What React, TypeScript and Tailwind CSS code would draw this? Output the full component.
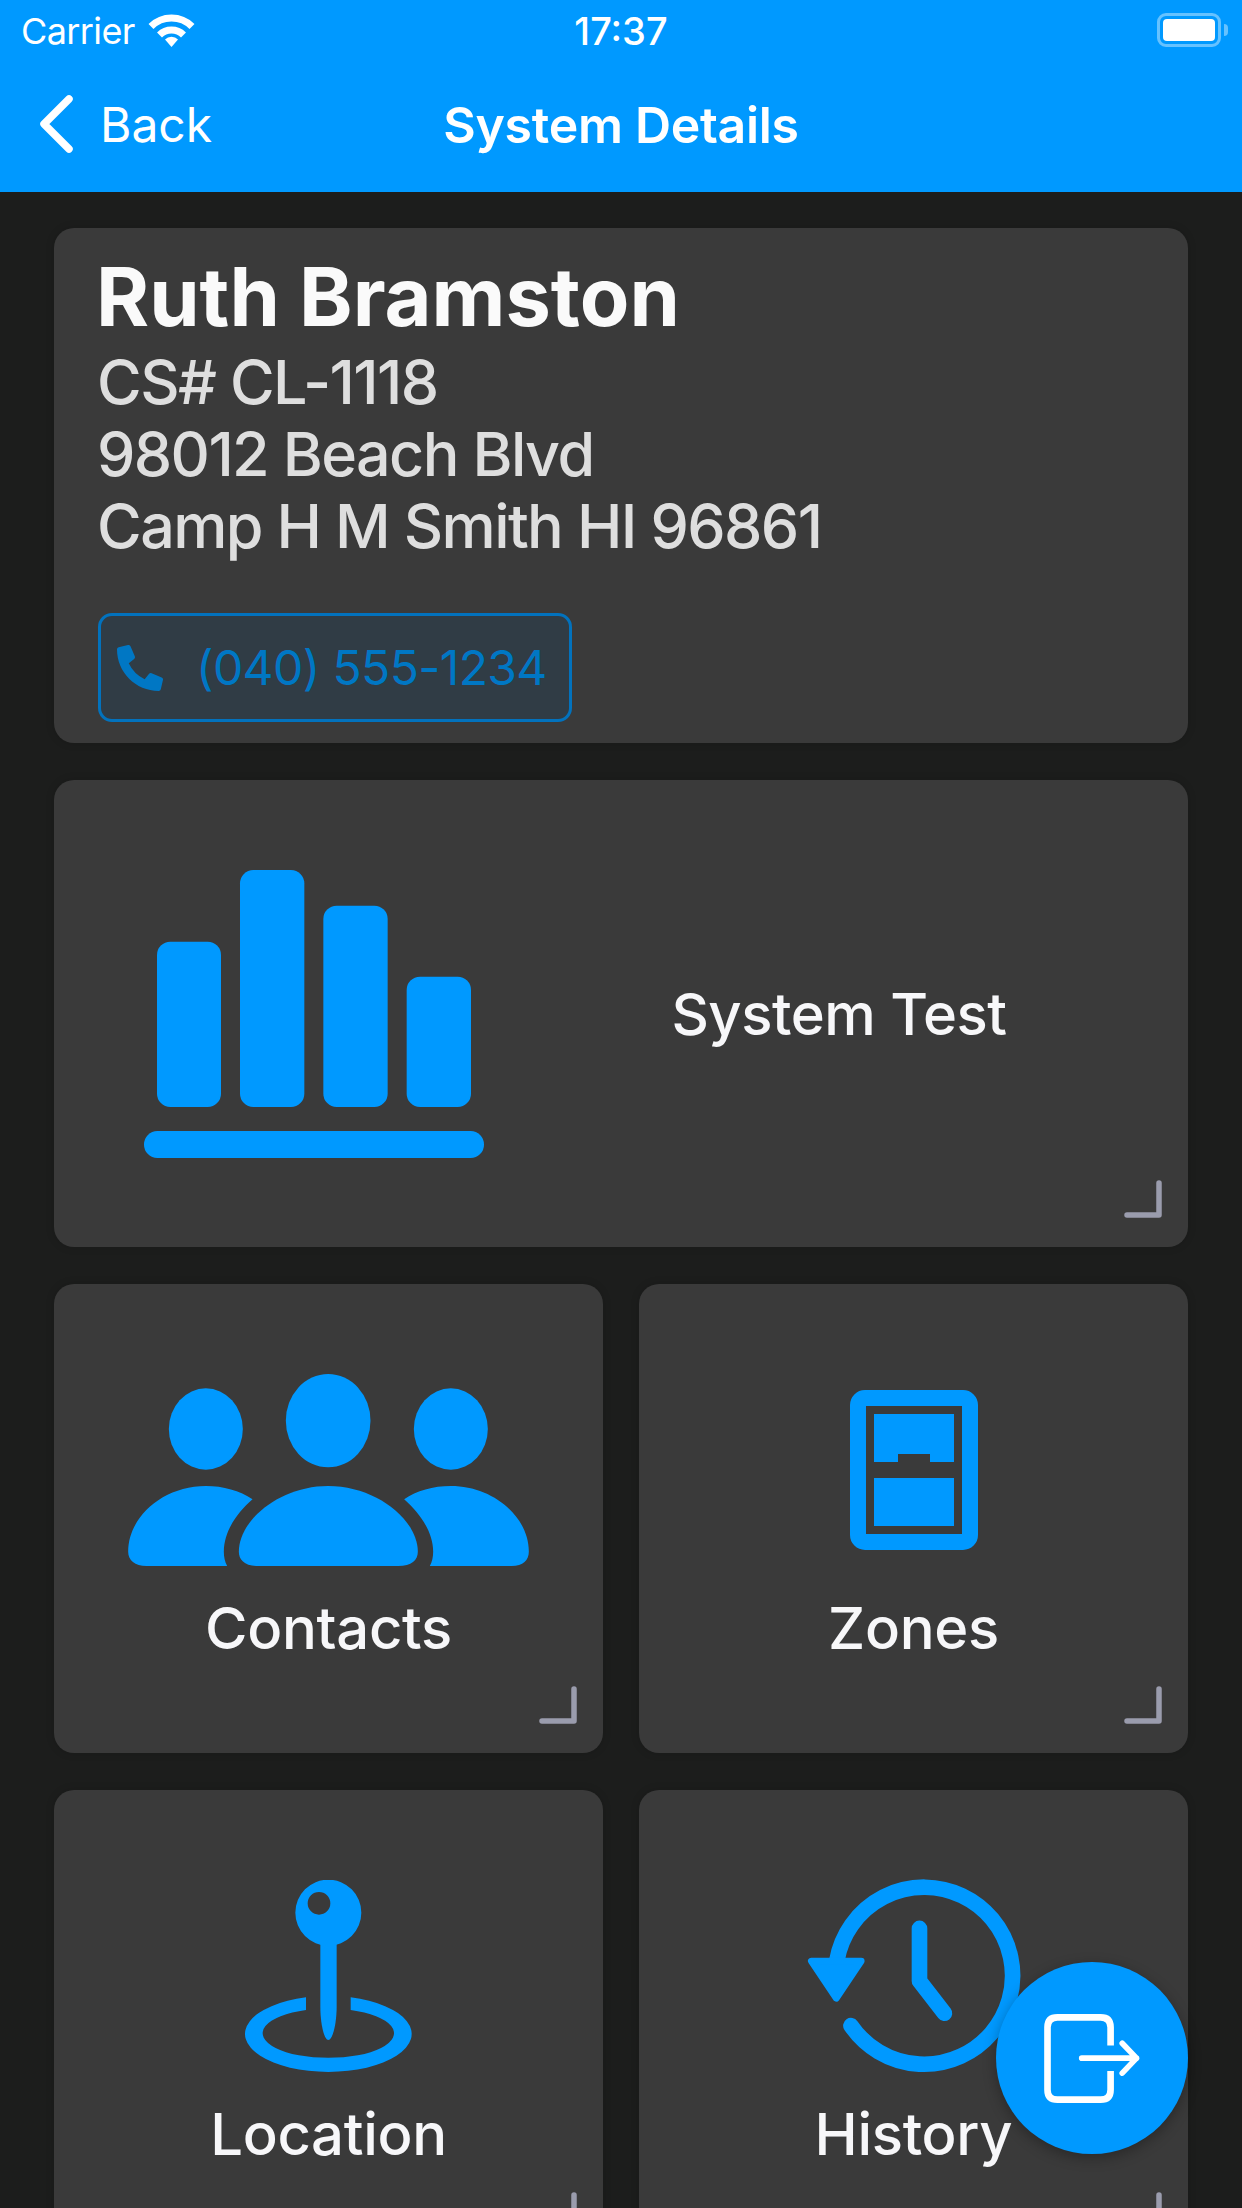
import { ReactNode } from 'react'
import { FaPhoneAlt } from 'react-icons/fa'

const sans = 'font-[Inter,"Noto_Sans",sans-serif]'

function CornerMark() {
  return (
    <svg className="absolute right-[26px] bottom-[29px]" width="38" height="38" viewBox="0 0 38 38" fill="none">
      <path d="M3 35H35V3" stroke="#9a9cad" strokeWidth="5.5" strokeLinecap="round" strokeLinejoin="round" />
    </svg>
  )
}

function StatusBar() {
  return (
    <div className="relative flex h-[60px] items-center pt-[2px] text-[36px] text-white">
      <span className="ml-[21px] leading-none tracking-[-0.6px]">Carrier</span>
      <svg className="ml-[13px] -mt-[2px]" width="47" height="33" viewBox="0 0 47 33" fill="none" stroke="#fff">
        <path d="M3 12.5A29 29 0 0 1 44 12.5" strokeWidth="7" />
        <path d="M11.5 21A17 17 0 0 1 35.5 21" strokeWidth="7" />
        <path d="M23.5 33L17 25.5A9 9 0 0 1 30 25.5Z" fill="#fff" stroke="none" />
      </svg>
      <span className="absolute left-0 right-0 text-center text-[38px] font-medium leading-none">17:37</span>
      <div className="absolute right-[14px] top-[13px] flex items-center">
        <div className="h-[34px] w-[64px] rounded-[9px] border-[3px] border-white/40 p-[3px]">
          <div className="h-full w-full rounded-[4px] bg-white" />
        </div>
        <div className="ml-[3px] h-[12px] w-[4px] rounded-r-full bg-white/40" />
      </div>
    </div>
  )
}

function NavBar() {
  return (
    <div className="relative flex h-[132px] items-center text-[48px] text-white">
      <svg className="ml-[39px] mb-[4px]" width="34" height="58" viewBox="0 0 34 58" fill="none">
        <path d="M30 4L5 29L30 54" stroke="#fff" strokeWidth="7.5" strokeLinecap="round" strokeLinejoin="round" />
      </svg>
      <span className="ml-[27px] mb-[2px] leading-none">Back</span>
      <span className="absolute left-0 right-0 mb-[2px] text-center text-[50px] font-semibold leading-none tracking-[-0.3px]">System Details</span>
    </div>
  )
}

function InfoCard() {
  return (
    <div className="h-[515px] rounded-[20px] bg-[#3a3a3a] pl-[44px] pt-[20px] shadow-[0_0_8px_rgba(0,0,0,0.15)]">
      <div className="-ml-[2px] text-[81px] font-bold leading-[98px] text-[#fafafa]">Ruth Bramston</div>
      <div className="-ml-[1px] text-[61px] font-[520] leading-[72px] tracking-[-1.6px] text-[#dedede]">
        <div>CS# CL-1118</div>
        <div>98012 Beach Blvd</div>
        <div>Camp H M Smith HI 96861</div>
      </div>
      <div className="mt-[51px] flex h-[109px] w-[474px] items-center rounded-[14px] border-[3px] border-[#0272bd] bg-[#303c45] pl-[15px]">
        <FaPhoneAlt className="h-[46px] w-[48px] text-[#0077c4]" />
        <span className="ml-[32px] text-[48px] leading-none tracking-[-0.6px] text-[#0077c4]">(040) 555-1234</span>
      </div>
    </div>
  )
}

function SystemTestCard() {
  return (
    <div className="relative flex h-[467px] items-center rounded-[20px] bg-[#3a3a3a] pl-[90px] shadow-[0_0_8px_rgba(0,0,0,0.15)]">
      <svg width="340" height="288" viewBox="72 90 1020 864" fill="#0099ff">
        <rect x="111" y="305" width="192" height="496" rx="40" />
        <rect x="360" y="90" width="193" height="711" rx="40" />
        <rect x="610" y="197" width="193" height="604" rx="40" />
        <rect x="860" y="410" width="193" height="391" rx="40" />
        <rect x="72" y="873" width="1020" height="81" rx="40" />
      </svg>
      <div className="flex-1 pl-[6px] text-center text-[58px] font-[530] leading-none tracking-[-0.5px] text-[#f7f7f9]">System Test</div>
      <CornerMark />
    </div>
  )
}

function ActionCard({ label, icon }: { label: string; icon: ReactNode }) {
  return (
    <div className="relative flex h-[469px] flex-col items-center rounded-[20px] bg-[#3a3a3a] pt-[90px] shadow-[0_0_8px_rgba(0,0,0,0.15)]">
      <div className="flex h-[192px] items-center justify-center">{icon}</div>
      <div className="mt-[30px] text-[58px] font-[530] leading-[64px] tracking-[-0.3px] text-[#f7f7f9]">{label}</div>
      <CornerMark />
    </div>
  )
}

const contactsIcon = (
  <svg width="401" height="192" viewBox="55 72 1202 576" fill="#0099ff">
    <ellipse cx="655" cy="212" rx="127" ry="140" />
    <ellipse cx="288" cy="237" rx="111" ry="122" />
    <ellipse cx="1023" cy="237" rx="111" ry="122" />
    <path d="M445 648C405 648 387 630 387 605C387 510 510 408 655 408C800 408 924 510 924 605C924 630 905 648 865 648Z" />
    <path d="M110 648C75 648 55 630 55 605C55 500 160 408 288 408C340 408 390 422 428 448C380 490 342 545 342 605C342 620 345 635 352 648Z" />
    <path d="M1205 648C1240 648 1257 630 1257 605C1257 500 1150 408 1023 408C970 408 920 422 883 448C930 490 970 545 970 605C970 620 967 635 960 648Z" />
  </svg>
)

const zonesIcon = (
  <svg width="128" height="160" viewBox="90 60 384 480" fill="#0099ff" fillRule="evenodd">
    <path d="M135 60H429A45 45 0 0 1 474 105V495A45 45 0 0 1 429 540H135A45 45 0 0 1 90 495V105A45 45 0 0 1 135 60ZM138 108V492H426V108Z" />
    <path d="M162 132H402V276H330V252H234V276H162Z" />
    <rect x="162" y="324" width="240" height="144" />
  </svg>
)

const locationIcon = (
  <svg width="167" height="192" viewBox="75 60 501 576" fill="#0099ff" fillRule="evenodd">
    <path d="M325 59A99 99 0 1 1 325 257A99 99 0 1 1 325 59ZM297 96A34 34 0 1 0 297 164A34 34 0 1 0 297 96Z" />
    <path d="M301 240H350V440C350 490 338 540 325 540C312 540 301 490 301 440Z" />
    <path d="M392 412A250 114 0 1 1 258 412V450A197 74 0 1 0 392 450Z" />
  </svg>
)

const historyIcon = (
  <svg className="overflow-visible" width="212" height="192" viewBox="55 60 637 576" fill="none" stroke="#0099ff">
    <path d="M142 300A266 266 0 1 1 184 497" strokeWidth="47" strokeLinecap="round" />
    <polygon points="65,303 215,303 140,415" fill="#0099ff" strokeWidth="20" strokeLinejoin="round" />
    <path d="M390 205V363L465 460" strokeWidth="47" strokeLinecap="round" strokeLinejoin="round" />
  </svg>
)

export default function App() {
  return (
    <div className={`relative h-[2208px] w-[1242px] overflow-hidden bg-[#1c1d1c] ${sans}`}>
      <div className="bg-[#0099ff]">
        <StatusBar />
        <NavBar />
      </div>

      <div className="flex flex-col gap-[37px] px-[54px] pt-[36px]">
        <InfoCard />
        <SystemTestCard />
        <div className="grid grid-cols-2 gap-[36px]">
          <ActionCard label="Contacts" icon={contactsIcon} />
          <ActionCard label="Zones" icon={zonesIcon} />
        </div>
        <div className="grid grid-cols-2 gap-[36px]">
          <ActionCard label="Location" icon={locationIcon} />
          <ActionCard label="History" icon={historyIcon} />
        </div>
      </div>

      {/* Logout button floats over the grid */}
      <button className="absolute bottom-[54px] right-[54px] flex h-[192px] w-[192px] items-center justify-center rounded-full bg-[#0099ff] shadow-[0_4px_14px_rgba(0,0,0,0.3)]">
        <svg width="96" height="89" viewBox="762 460 288 268" fill="none" stroke="#fff" strokeLinecap="round" strokeLinejoin="round">
          <path d="M962 555V500Q962 470 932 470H802Q772 470 772 500V688Q772 718 802 718H932Q962 718 962 688V632" strokeWidth="20" strokeLinecap="butt" />
          <path d="M875 593H1040M997 548L1040 593L997 638" strokeWidth="17" />
        </svg>
      </button>
    </div>
  )
}
